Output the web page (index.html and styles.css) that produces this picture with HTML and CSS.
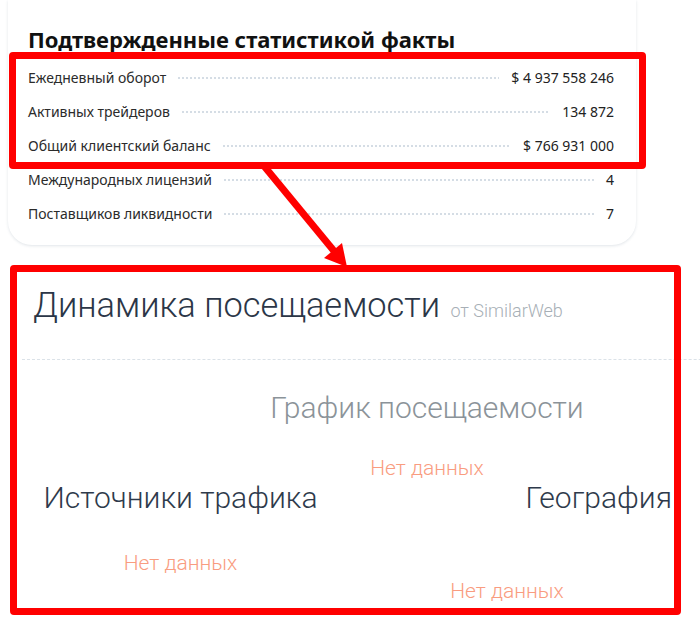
FILE: index.html
```html
<!DOCTYPE html>
<html lang="ru">
<head>
    <meta charset="UTF-8">
    <meta name="viewport" content="width=device-width, initial-scale=1.0">
    <title>Статистика брокера</title>
    <link rel="stylesheet" href="styles.css">
</head>
<body>
    <div class="page">
        <div class="facts-card">
            <h2 class="facts-title">Подтвержденные статистикой факты</h2>
            <div class="fact-row"><span class="fact-label">Ежедневный оборот</span><span class="dots"></span><span class="fact-value">$ 4 937 558 246</span></div>
            <div class="fact-row"><span class="fact-label">Активных трейдеров</span><span class="dots"></span><span class="fact-value">134 872</span></div>
            <div class="fact-row"><span class="fact-label">Общий клиентский баланс</span><span class="dots"></span><span class="fact-value">$ 766 931 000</span></div>
            <div class="fact-row"><span class="fact-label">Международных лицензий</span><span class="dots"></span><span class="fact-value">4</span></div>
            <div class="fact-row"><span class="fact-label">Поставщиков ликвидности</span><span class="dots"></span><span class="fact-value">7</span></div>
        </div>

        <div class="traffic">
            <div class="traffic-header">
                <h2 class="traffic-title">Динамика посещаемости <span class="traffic-source">от SimilarWeb</span></h2>
            </div>
            <div class="chart-block">
                <h3 class="block-title muted">График посещаемости</h3>
                <div class="no-data">Нет данных</div>
            </div>
            <div class="columns">
                <div class="col col-left">
                    <h3 class="block-title">Источники трафика</h3>
                    <div class="no-data">Нет данных</div>
                </div>
                <div class="col col-right">
                    <h3 class="block-title">География</h3>
                    <div class="no-data">Нет данных</div>
                </div>
            </div>
        </div>

        <!-- пометки поверх скриншота -->
        <div class="mark mark-top"></div>
        <div class="mark mark-bottom"></div>
        <svg class="mark-arrow" width="700" height="635" viewBox="0 0 700 635">
            <line x1="264" y1="166" x2="334" y2="251" stroke="#ff0000" stroke-width="7"/>
            <polygon points="347,267 324,258 342,243" fill="#ff0000"/>
        </svg>
    </div>
</body>
</html>
```

FILE: styles.css
```css
body {
    margin: 0;
    background-color: #fff;
    overflow: hidden;
}

.page {
    position: relative;
    width: 700px;
    height: 635px;
    overflow: hidden;
}

.facts-card {
    margin-left: 8px;
    width: 586px;
    padding: 26px 22px 15px 20px;
    background-color: #fff;
    border-radius: 0 0 24px 24px;
    box-shadow: 0 1px 3px rgba(40, 70, 100, 0.14);
    font-family: 'Noto Sans', sans-serif;
    color: #2b2b2b;
}

.facts-title {
    margin: 0 0 8px;
    font-size: 22px;
    line-height: 26px;
    font-weight: bold;
    color: #111;
}

.fact-row {
    display: flex;
    align-items: center;
    height: 34px;
    font-size: 14px;
}

.dots {
    flex: 1;
    height: 2px;
    margin: 2px 12px 0;
    background-image: repeating-linear-gradient(to right, #d5dde5 0 2px, transparent 2px 4px);
}

.fact-value {
    color: #222;
}

.traffic {
    width: 810px;
    margin-left: 22px;
    padding-top: 40px;
    font-family: Roboto, sans-serif;
    font-weight: 300;
}

.traffic-header {
    padding: 0 0 28px 11px;
    border-bottom: 1px dashed #dbe2e8;
}

.traffic-title {
    margin: 0;
    font-size: 34.4px;
    line-height: 40px;
    font-weight: 300;
    color: #2b3647;
}

.traffic-source {
    margin-left: 2px;
    font-size: 18px;
    color: #a7afb6;
}

.chart-block {
    text-align: center;
    padding-top: 31px;
}

.block-title {
    margin: 0;
    font-size: 30px;
    line-height: 34px;
    font-weight: 300;
    color: #2e3a4b;
}

.block-title.muted {
    color: #8b9399;
}

.no-data {
    font-size: 21px;
    line-height: 26px;
    color: #f99c80;
}

.chart-block .no-data {
    margin-top: 30px;
}

.columns {
    display: grid;
    grid-template-columns: 317px 330px;
    column-gap: 3px;
}

.col-left {
    text-align: center;
}

.col-left .no-data {
    margin-top: 35px;
}

.col-right .block-title {
    text-align: right;
}

.col-right .no-data {
    text-align: center;
    margin-top: 63px;
}

.mark {
    position: absolute;
    border: 7px solid #ff0000;
    border-radius: 4px;
    box-sizing: border-box;
}

.mark-top {
    left: 9px;
    top: 52px;
    width: 637px;
    height: 117px;
}

.mark-bottom {
    left: 10px;
    top: 265px;
    width: 671px;
    height: 350px;
}

.mark-arrow {
    position: absolute;
    left: 0;
    top: 0;
    pointer-events: none;
}
```
